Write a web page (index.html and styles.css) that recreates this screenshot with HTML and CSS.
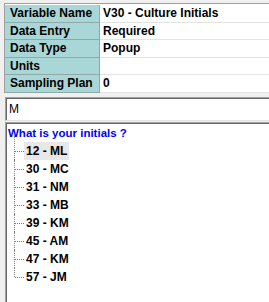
FILE: index.html
```html
<!DOCTYPE html>
<html lang="en">
  <head>
    <meta charset="UTF-8" />
    <meta name="viewport" content="width=device-width, initial-scale=1.0" />
    <title>Variable Properties</title>
    <link rel="stylesheet" href="styles.css">
  </head>
  <body>
    <div class="prop-grid">
      <div class="prop-label">Variable Name</div>
      <div class="prop-value">V30 - Culture Initials</div>
      <div class="prop-label">Data Entry</div>
      <div class="prop-value">Required</div>
      <div class="prop-label">Data Type</div>
      <div class="prop-value">Popup</div>
      <div class="prop-label">Units</div>
      <div class="prop-value"></div>
      <div class="prop-label">Sampling Plan</div>
      <div class="prop-value">0</div>
    </div>

    <div class="search-box">M</div>

    <div class="tree-box">
      <div class="tree-title">What is your initials ?</div>
      <ul class="tree-list">
        <li class="tree-item"><span class="item-text selected">12 - ML</span></li>
        <li class="tree-item"><span class="item-text">30 - MC</span></li>
        <li class="tree-item"><span class="item-text">31 - NM</span></li>
        <li class="tree-item"><span class="item-text">33 - MB</span></li>
        <li class="tree-item"><span class="item-text">39 - KM</span></li>
        <li class="tree-item"><span class="item-text">45 - AM</span></li>
        <li class="tree-item"><span class="item-text">47 - KM</span></li>
        <li class="tree-item"><span class="item-text">57 - JM</span></li>
      </ul>
    </div>
  </body>
</html>
```

FILE: styles.css
```css
html,
body {
  height: 100%;
}
body {
  margin: 0;
  padding-left: 4px;
  background: #f0f0f0;
  font-family: "Liberation Sans", Arial, sans-serif;
  font-size: 12px;
  color: #000;
  overflow: hidden;
  display: flex;
  flex-direction: column;
  box-sizing: border-box;
}
.prop-grid {
  margin-top: 3px;
  border-top: 1px solid #a0a0a0;
  border-left: 1px solid #a0a0a0;
  padding-top: 1px;
  background: #fff;
  display: grid;
  grid-template-columns: 95px 1fr;
  grid-auto-rows: 17.5px;
  font-weight: bold;
}
.prop-label,
.prop-value {
  box-sizing: border-box;
  display: flex;
  align-items: center;
  white-space: nowrap;
}
.prop-label {
  background: #a9d6d6;
  border-bottom: 1px solid #8fa8a8;
  border-right: 1px solid #a0a0a0;
  padding-left: 5px;
}
.prop-value {
  border-bottom: 1px solid #e3e3e3;
  padding-left: 3px;
}
.search-box {
  margin-top: 4px;
  margin-left: 1px;
  height: 24px;
  box-sizing: border-box;
  background: #fff;
  border-top: 1px solid #a0a0a0;
  border-left: 1px solid #a0a0a0;
  border-bottom: 1px solid #e3e3e3;
  box-shadow: inset 1px 1px 0 #696969;
  padding: 2px 0 0 3px;
  line-height: 19px;
}
.tree-box {
  flex: 1;
  margin-top: 1px;
  margin-left: 1px;
  background: #fff;
  border-top: 1px solid #a0a0a0;
  border-left: 1px solid #a0a0a0;
  box-shadow: inset 1px 1px 0 #696969;
  padding: 1px 0 0 0;
  font-weight: bold;
}
.tree-title {
  color: #0000ff;
  font-size: 11.5px;
  line-height: 18px;
  padding-left: 2px;
}
.tree-list {
  list-style: none;
  margin: 0;
  padding: 0;
}
.tree-item {
  position: relative;
  height: 18px;
  line-height: 18px;
  padding-left: 18px;
}
.tree-item::before {
  content: "";
  position: absolute;
  left: 8px;
  top: 0;
  bottom: 0;
  border-left: 1px dotted #808080;
}
.tree-item:first-child::before {
  top: -6px;
}
.tree-item:last-child::before {
  bottom: 9px;
}
.tree-item::after {
  content: "";
  position: absolute;
  left: 9px;
  width: 9px;
  top: 9px;
  border-top: 1px dotted #808080;
}
.item-text {
  display: inline-block;
  padding: 0 2px;
}
.item-text.selected {
  background: #e8e8e8;
}
```
